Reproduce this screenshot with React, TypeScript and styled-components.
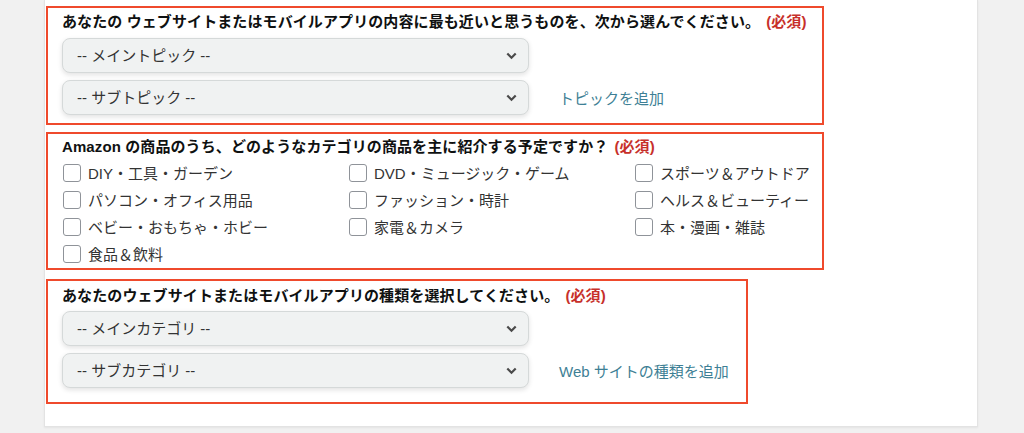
import React from "react";
import styled, { createGlobalStyle } from "styled-components";

const GlobalStyle = createGlobalStyle`
  html, body {
    margin: 0;
    padding: 0;
    background: #f1f1f1;
  }
  body {
    font-family: "Liberation Sans", "Noto Sans CJK JP", sans-serif;
    color: #0f1111;
  }
`;

const Page = styled.div`
  padding-left: 44px;
  height: 433px;
  overflow: hidden;
`;

const Panel = styled.div`
  width: 931px;
  background: #ffffff;
  border: 1px solid #e3e3e3;
  border-top: 0;
  box-shadow: 0 1px 2px rgba(0, 0, 0, 0.06);
  padding: 6px 0 22px 1px;
  display: flex;
  flex-direction: column;
  align-items: flex-start;
`;

const Section = styled.div<{ $width: number; $top: number; $pt: number; $pb: number }>`
  box-sizing: border-box;
  width: ${(p) => p.$width}px;
  margin-top: ${(p) => p.$top}px;
  border: 2px solid #ef4a2c;
  padding: ${(p) => p.$pt}px 14px ${(p) => p.$pb}px 14px;
`;

const Title = styled.div`
  font-size: 15px;
  line-height: 17px;
  font-weight: 700;
  letter-spacing: 0.1px;
  color: #0f1111;
  white-space: nowrap;
`;

const Required = styled.span`
  color: #c7302a;
  margin-left: 6px;
`;

const SelectRow = styled.div<{ $top?: number }>`
  display: flex;
  align-items: center;
  gap: 30px;
  margin-top: ${(p) => p.$top ?? 7}px;
`;

const SelectWrap = styled.div`
  position: relative;
  width: 467px;
  height: 35px;
`;

const Select = styled.select`
  appearance: none;
  box-sizing: border-box;
  width: 100%;
  height: 100%;
  padding: 0 36px 0 14px;
  font-family: inherit;
  font-size: 15px;
  color: #333333;
  background: #f0f2f2;
  border: 1px solid #d5d9d9;
  border-radius: 8px;
  box-shadow: 0 2px 5px rgba(15, 17, 17, 0.12);
  outline: none;
`;

const Chevron = styled.svg`
  position: absolute;
  right: 12px;
  top: 14px;
  pointer-events: none;
`;

const AddLink = styled.a`
  font-size: 15px;
  color: #3e7f95;
  text-decoration: none;
  white-space: nowrap;
`;

const CheckGrid = styled.div`
  display: grid;
  grid-template-columns: 286px 286px auto;
  margin-top: 4px;
`;

const CheckItem = styled.label`
  display: flex;
  align-items: center;
  gap: 7px;
  height: 27px;
  font-size: 15px;
  color: #333333;
  white-space: nowrap;
  padding-left: 1px;
`;

const Box = styled.input`
  appearance: none;
  box-sizing: border-box;
  width: 18px;
  height: 18px;
  margin: 0;
  border: 1px solid #8f9399;
  border-radius: 3px;
  background: #ffffff;
`;

const Dropdown = ({ label }: { label: string }) => (
  <SelectWrap>
    <Select defaultValue="">
      <option value="">{label}</option>
    </Select>
    <Chevron width="11" height="8" viewBox="0 0 11 8">
      <path d="M1.3 1.5 L5.5 5.7 L9.7 1.5" fill="none" stroke="#4a4a4a" strokeWidth="2.2" />
    </Chevron>
  </SelectWrap>
);

const categories = [
  "DIY・工具・ガーデン",
  "DVD・ミュージック・ゲーム",
  "スポーツ＆アウトドア",
  "パソコン・オフィス用品",
  "ファッション・時計",
  "ヘルス＆ビューティー",
  "ベビー・おもちゃ・ホビー",
  "家電＆カメラ",
  "本・漫画・雑誌",
  "食品＆飲料",
];

const App: React.FC = () => {
  return (
    <>
      <GlobalStyle />
      <Page>
        <Panel>
          <Section $width={778} $top={0} $pt={5} $pb={8}>
            <Title>
              あなたの ウェブサイトまたはモバイルアプリの内容に最も近いと思うものを、次から選んでください。
              <Required>(必須)</Required>
            </Title>
            <SelectRow $top={8}>
              <Dropdown label="-- メイントピック --" />
            </SelectRow>
            <SelectRow>
              <Dropdown label="-- サブトピック --" />
              <AddLink href="#">トピックを追加</AddLink>
            </SelectRow>
          </Section>

          <Section $width={778} $top={7} $pt={4} $pb={1}>
            <Title>
              Amazon の商品のうち、どのようなカテゴリの商品を主に紹介する予定ですか？
              <Required>(必須)</Required>
            </Title>
            <CheckGrid>
              {categories.map((c) => (
                <CheckItem key={c}>
                  <Box type="checkbox" />
                  {c}
                </CheckItem>
              ))}
            </CheckGrid>
          </Section>

          <Section $width={702} $top={9} $pt={6} $pb={14}>
            <Title>
              あなたのウェブサイトまたはモバイルアプリの種類を選択してください。
              <Required>(必須)</Required>
            </Title>
            <SelectRow>
              <Dropdown label="-- メインカテゴリ --" />
            </SelectRow>
            <SelectRow>
              <Dropdown label="-- サブカテゴリ --" />
              <AddLink href="#">Web サイトの種類を追加</AddLink>
            </SelectRow>
          </Section>
        </Panel>
      </Page>
    </>
  );
};

export default App;
